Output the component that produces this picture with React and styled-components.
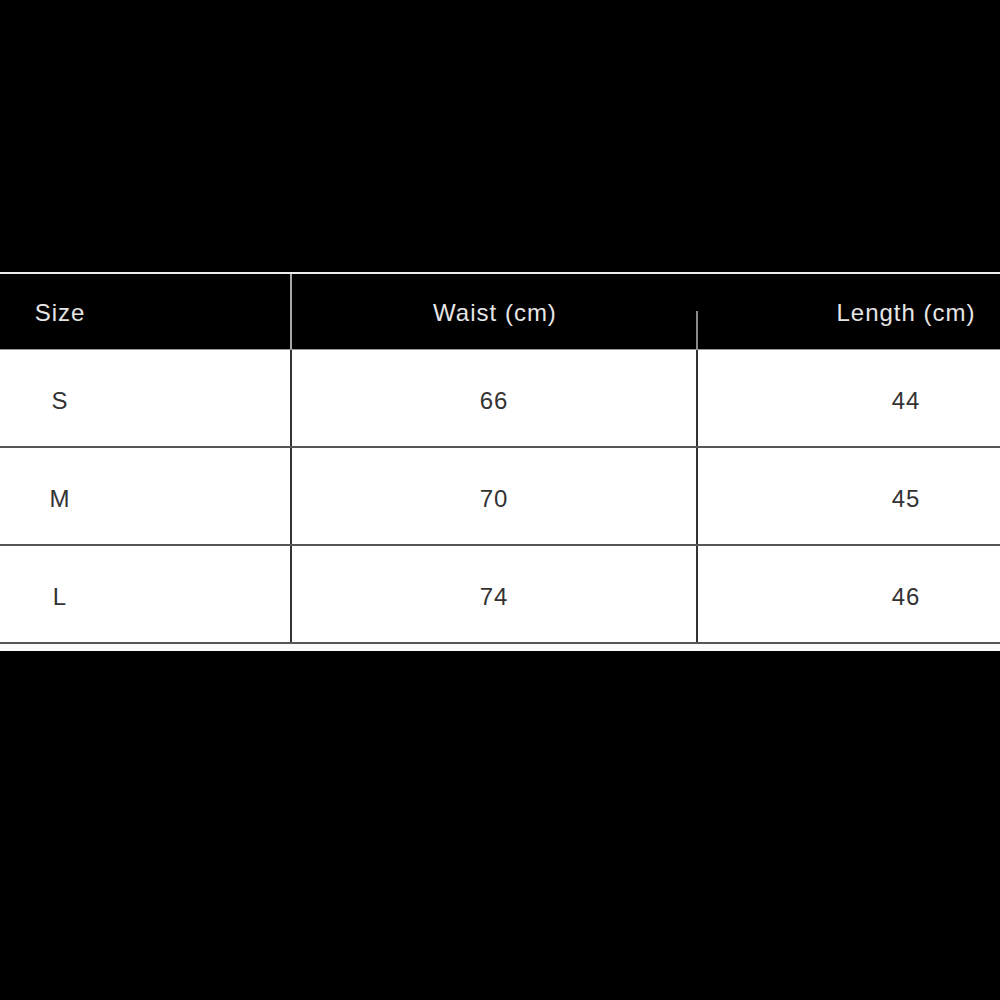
import React from 'react'
import styled, { createGlobalStyle } from 'styled-components'

const GlobalStyle = createGlobalStyle`
body{
  margin:0;
  background:#000;
  font-family:"Liberation Sans", Arial, sans-serif;
}
`

const Page = styled.div`
height:1000px;
background:#000;
padding-top:272px;
box-sizing:border-box;
`

const Table = styled.div`
border-top:2px solid #ececec;
border-bottom:7px solid #fbfbfb;
`

const Row = styled.div`
display:grid;
grid-template-columns:292px 406px 1fr;
height:${p => (p.head ? '76px' : '98px')};
background:${p => (p.head ? '#000' : '#fff')};
border-bottom:${p => (p.head ? '1px solid #9a9a9a' : '2px solid #555')};
box-sizing:border-box;
`

const Cell = styled.div`
display:flex;
align-items:center;
justify-content:center;
box-sizing:border-box;
font-size:24px;
letter-spacing:1px;
color:${p => (p.head ? '#e6e6e6' : '#333')};
padding-top:${p => (p.head ? '2px' : '6px')};
padding-right:${p => (p.col === 0 ? '170px' : '0')};
padding-left:${p => (p.col === 2 ? '114px' : '0')};
border-right:${p =>
  p.col === 2 ? 'none' : p.head ? (p.col === 0 ? '2px solid #a8a8a8' : 'none') : '2px solid #333'};
background:${p =>
  p.head && p.col === 1 ? 'linear-gradient(#8a8a8a,#8a8a8a) right bottom / 2px 38px no-repeat' : 'none'};
`

const columns = ['Size', 'Waist (cm)', 'Length (cm)']
const rows = [
  ['S', '66', '44'],
  ['M', '70', '45'],
  ['L', '74', '46'],
]

const App = () => {
  return (
    <Page>
      <GlobalStyle />
      <Table>
        <Row head>
          {columns.map((c, i) => (
            <Cell head col={i} key={c}>{c}</Cell>
          ))}
        </Row>
        {rows.map(r => (
          <Row key={r[0]}>
            {r.map((v, i) => (
              <Cell col={i} key={i}>{v}</Cell>
            ))}
          </Row>
        ))}
      </Table>
    </Page>
  )
}

export default App
